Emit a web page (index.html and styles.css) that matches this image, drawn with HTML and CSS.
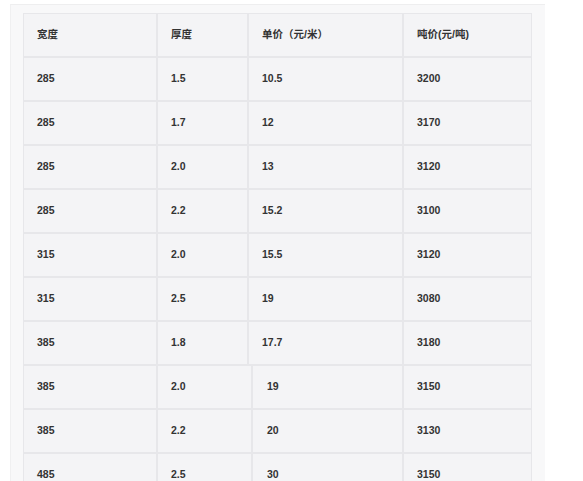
FILE: index.html
```html
<!DOCTYPE html>
<html lang="zh">
<head>
<meta charset="utf-8">
<link rel="stylesheet" href="styles.css">
</head>
<body>
<div class="panel">
  <table class="grid">
    <colgroup><col class="c1"><col class="c2"><col class="c3"><col class="c4"></colgroup>
    <tr><td>宽度</td><td>厚度</td><td>单价（元/米）</td><td>吨价(元/吨)</td></tr>
    <tr><td>285</td><td>1.5</td><td>10.5</td><td>3200</td></tr>
    <tr><td>285</td><td>1.7</td><td>12</td><td>3170</td></tr>
    <tr><td>285</td><td>2.0</td><td>13</td><td>3120</td></tr>
    <tr><td>285</td><td>2.2</td><td>15.2</td><td>3100</td></tr>
    <tr><td>315</td><td>2.0</td><td>15.5</td><td>3120</td></tr>
    <tr><td>315</td><td>2.5</td><td>19</td><td>3080</td></tr>
    <tr><td>385</td><td>1.8</td><td>17.7</td><td>3180</td></tr>
  </table>
  <table class="grid grid-b">
    <colgroup><col class="c1"><col class="c2b"><col class="c3b"><col class="c4"></colgroup>
    <tr><td>385</td><td>2.0</td><td class="shift">19</td><td>3150</td></tr>
    <tr><td>385</td><td>2.2</td><td class="shift">20</td><td>3130</td></tr>
    <tr><td>485</td><td>2.5</td><td class="shift">30</td><td>3150</td></tr>
  </table>
</div>
</body>
</html>
```

FILE: styles.css
```css
html, body {
  margin: 0;
  padding: 0;
  background: #ffffff;
  overflow: hidden;
}
body {
  width: 583px;
  height: 481px;
  font-family: "Liberation Sans", Arial, "Noto Sans CJK SC", sans-serif;
}
.panel {
  margin: 4px 0 0 10px;
  width: 535px;
  height: 520px;
  background: #f8f8f9;
  border-top: 1px solid #eeeeef;
  border-left: 1px solid #f0f0f1;
  box-sizing: border-box;
  padding: 8px 0 0 12px;
}
.grid {
  border-collapse: separate;
  border-spacing: 0;
  table-layout: fixed;
  width: 509px;
}
.c1 { width: 134px; }
.c2 { width: 91px; }
.c3 { width: 155px; }
.c4 { width: 129px; }
.c2b { width: 95px; }
.c3b { width: 151px; }
.grid td {
  height: 44px;
  box-sizing: border-box;
  padding: 0 0 3px 13px;
  background: #f4f4f6;
  border: 1px solid #e7e7ea;
  color: #333333;
  font-size: 10.5px;
  font-weight: bold;
  vertical-align: middle;
  white-space: nowrap;
}
.grid td.shift {
  padding-left: 14px;
}
```
